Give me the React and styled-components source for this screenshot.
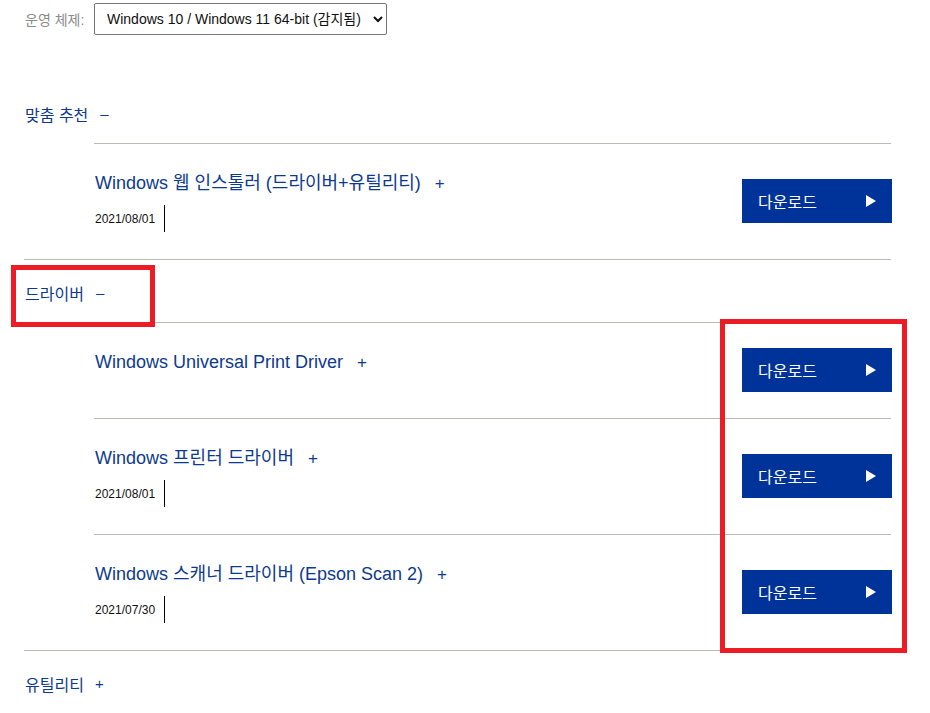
import React from "react";
import styled, { createGlobalStyle } from "styled-components";

const Global = createGlobalStyle`
  html, body { margin: 0; padding: 0; background: #fff; }
  body {
    font-family: "Liberation Sans", Arial, "Noto Sans CJK KR", sans-serif;
    color: #222;
  }
  #root { position: relative; }
`;

const Page = styled.div`
  position: relative;
  width: 930px;
  height: 713px;
  overflow: hidden;
  padding: 0 39px 0 24px;
  box-sizing: border-box;
`;

const OsRow = styled.div`
  display: grid;
  grid-template-columns: 70px auto;
  align-items: center;
  padding-top: 3px;
`;

const OsLabel = styled.label`
  font-size: 14px;
  color: #8a8a8a;
  padding-left: 1px;
`;

const OsSelect = styled.select`
  width: 293px;
  height: 32px;
  font-family: "Liberation Sans", Arial, "Noto Sans CJK KR", sans-serif;
  font-size: 14px;
  color: #111;
  border: 1px solid #767676;
  border-radius: 2px;
  background: #fff;
  padding: 0 6px 0 8px;
`;

const Sections = styled.div`
  margin-top: 46px;
`;

const Section = styled.section`
  border-bottom: ${(p) => (p.$last ? "none" : "1px solid #bdbab5")};
`;

const SectionHead = styled.div`
  height: 62px;
  box-sizing: border-box;
  padding: 3px 0 0 1px;
  display: flex;
  align-items: center;
  font-size: 16px;
  color: #0d3a8f;
`;

const Toggle = styled.span`
  margin-left: ${(p) => p.$gap || 10}px;
  font-size: ${(p) => p.$size || 15}px;
  color: #0d3a8f;
`;

const ItemList = styled.div`
  margin-left: 70px;
`;

const Item = styled.div`
  border-top: 1px solid #bdbab5;
  display: flex;
  justify-content: space-between;
  align-items: flex-start;
  padding: ${(p) => (p.$dated ? "25px 0 26px" : "25px 0 26px")};
  min-height: 44px;
`;

const ItemInfo = styled.div`
  display: flex;
  flex-direction: column;
  align-items: flex-start;
  padding-left: 1px;
  padding-bottom: ${(p) => (p.$dated ? 1 : 0)}px;
`;

const ItemTitle = styled.div`
  font-size: 18px;
  line-height: 28px;
  color: #0d3a8f;
`;

const DateTag = styled.div`
  margin-top: 7px;
  height: 27px;
  display: flex;
  align-items: center;
  padding-right: 9px;
  border-right: 1px solid #000;
  font-size: 12px;
  color: #111;
`;

const DownloadButton = styled.button`
  align-self: center;
  width: 150px;
  height: 44px;
  background: #003399;
  border: none;
  color: #fff;
  display: flex;
  align-items: center;
  justify-content: space-between;
  padding: 0 16px 0 16px;
  font-family: "Liberation Sans", Arial, "Noto Sans CJK KR", sans-serif;
  font-size: 16px;
  cursor: pointer;
  margin-right: -1px;
`;

const Arrow = styled.span`
  width: 0;
  height: 0;
  border-top: 6px solid transparent;
  border-bottom: 6px solid transparent;
  border-left: 10px solid #fff;
`;

const Highlight = styled.div`
  position: absolute;
  left: ${(p) => p.$x}px;
  top: ${(p) => p.$y}px;
  width: ${(p) => p.$w}px;
  height: ${(p) => p.$h}px;
  box-sizing: border-box;
  border: 5px solid #ec1c24;
  pointer-events: none;
`;

const sections = [
  {
    title: "맞춤 추천",
    open: true,
    items: [
      { name: "Windows 웹 인스톨러 (드라이버+유틸리티)", date: "2021/08/01" },
    ],
  },
  {
    title: "드라이버",
    open: true,
    items: [
      { name: "Windows Universal Print Driver" },
      { name: "Windows 프린터 드라이버", date: "2021/08/01" },
      { name: "Windows 스캐너 드라이버 (Epson Scan 2)", date: "2021/07/30" },
    ],
  },
  { title: "유틸리티", open: false, items: [] },
];

export default function App() {
  return (
    <>
      <Global />
      <Page>
        <OsRow>
          <OsLabel>운영 체제:</OsLabel>
          <OsSelect defaultValue="w">
            <option value="w">Windows 10 / Windows 11 64-bit (감지됨)</option>
          </OsSelect>
        </OsRow>
        <Sections>
          {sections.map((s, i) => (
            <Section key={s.title} $last={i === sections.length - 1}>
              <SectionHead>
                {s.title}
                <Toggle $gap={s.open ? 12 : 11}>{s.open ? "–" : "+"}</Toggle>
              </SectionHead>
              {s.items.length > 0 && (
                <ItemList>
                  {s.items.map((it) => (
                    <Item key={it.name} $dated={!!it.date}>
                      <ItemInfo $dated={!!it.date}>
                        <ItemTitle>
                          {it.name}
                          <Toggle $gap={14} $size={17}>+</Toggle>
                        </ItemTitle>
                        {it.date && <DateTag>{it.date}</DateTag>}
                      </ItemInfo>
                      <DownloadButton>
                        다운로드
                        <Arrow />
                      </DownloadButton>
                    </Item>
                  ))}
                </ItemList>
              )}
            </Section>
          ))}
        </Sections>
        <Highlight $x={11} $y={265} $w={144} $h={62} />
        <Highlight $x={720} $y={319} $w={187} $h={334} />
      </Page>
    </>
  );
}
